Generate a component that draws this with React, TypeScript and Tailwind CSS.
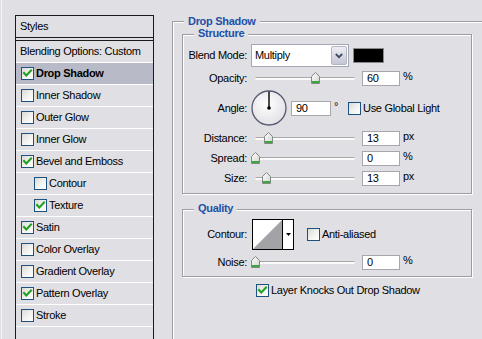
import React from "react";

function Check({ checked }: { checked?: boolean }) {
  return (
    <span className="relative inline-block w-[13px] h-[13px] shrink-0 border border-[#1c5180] bg-linear-to-br from-[#d9d9d4] via-[#f1f1ef] to-white">
      {checked && (
        <svg width="11" height="11" viewBox="0 0 11 11" className="absolute left-0 top-0">
          <path d="M2 5 L4.3 7.5 L9 2.6" stroke="#21a121" strokeWidth="2.1" fill="none" strokeLinecap="square" />
        </svg>
      )}
    </span>
  );
}

function Thumb() {
  return (
    <svg width="9" height="12" viewBox="0 0 9 12">
      <defs>
        <linearGradient id="tg" x1="0" y1="0" x2="1" y2="1">
          <stop offset="0" stopColor="#ffffff" />
          <stop offset="1" stopColor="#cfd3cf" />
        </linearGradient>
      </defs>
      <path d="M0.5 4.5 L4.5 0.5 L8.5 4.5 V11.5 H0.5 Z" fill="url(#tg)" stroke="#7f8a82" strokeWidth="1" />
      <rect x="1" y="9" width="7" height="2" fill="#3fa33f" />
    </svg>
  );
}

function Slider({ pos }: { pos: number }) {
  return (
    <div className="relative ml-[4px] w-[104px] h-full shrink-0">
      <div className="absolute left-[4px] right-0 top-[6px] h-[3px] rounded-[2px] bg-[#fbfbfb] border-t border-[#a8a8ac]" />
      <div className="absolute top-[1px] leading-none" style={{ left: pos }}>
        <Thumb />
      </div>
    </div>
  );
}

function NumBox({ value, w = "w-[38px]" }: { value: string; w?: string }) {
  return (
    <div className={`${w} h-[15px] shrink-0 bg-white border border-[#a6a6ab] pl-[4px] flex items-center leading-none`}>
      {value}
    </div>
  );
}

function Label({ children }: { children: React.ReactNode }) {
  return <span className="w-[64px] shrink-0 text-right whitespace-nowrap">{children}</span>;
}

function SliderRow({ label, pos, value, unit }: { label: string; pos: number; value: string; unit: string }) {
  return (
    <div className="flex items-center h-[15px] mt-[5px]">
      <Label>{label}</Label>
      <Slider pos={pos} />
      <div className="ml-[7px]">
        <NumBox value={value} />
      </div>
      <span className="ml-[3px] self-start leading-[11px]">{unit}</span>
    </div>
  );
}

const items: { label: string; checked?: boolean; selected?: boolean; indent?: boolean }[] = [
  { label: "Drop Shadow", checked: true, selected: true },
  { label: "Inner Shadow" },
  { label: "Outer Glow" },
  { label: "Inner Glow" },
  { label: "Bevel and Emboss", checked: true },
  { label: "Contour", indent: true },
  { label: "Texture", indent: true, checked: true },
  { label: "Satin", checked: true },
  { label: "Color Overlay" },
  { label: "Gradient Overlay" },
  { label: "Pattern Overlay", checked: true },
  { label: "Stroke" },
];

const etched = "border border-[#9d9da1] shadow-[inset_1px_1px_0_#ffffff,1px_1px_0_#ffffff]";

export default function App() {
  return (
    <div className="w-[482px] h-[339px] overflow-hidden bg-[#e0dfe3] flex font-['Liberation_Sans',Arial,sans-serif] text-[11px] tracking-[-0.3px] text-black">
      {/* left edge */}
      <div className="w-[1px] shrink-0" />
      <div className="w-[1px] shrink-0 bg-[#f4f4f6]" />
      {/* Styles list */}
      <div className="pl-[13px] pt-[15px] shrink-0">
        <div className="w-[139px] h-[340px] border-l border-t border-r border-[#1a1a1a] flex flex-col">
          <div className="h-[21px] flex items-center pl-[4px] border-b border-[#1a1a1a] box-content">Styles</div>
          <div className="h-[2px] border-b border-[#1a1a1a] box-content" />
          <div className="h-[21px] flex items-center pl-[4px] border-b border-white box-content">Blending Options: Custom</div>
          {items.map((it) => (
            <div
              key={it.label}
              className={`h-[21px] box-content flex items-center border-b border-white ${it.indent ? "pl-[18px]" : "pl-[5px]"} ${
                it.selected ? "bg-[#b9bac7] font-bold" : ""
              }`}
            >
              <Check checked={it.checked} />
              <span className="ml-[2px] whitespace-nowrap">{it.label}</span>
            </div>
          ))}
        </div>
      </div>

      {/* Drop Shadow group */}
      <div className="ml-[18px] mt-[21px] shrink-0">
        <div className={`relative w-[400px] h-[400px] ${etched}`}>
          <span className="absolute left-[11px] top-[-7px] px-[4px] leading-[13px] bg-[#e0dfe3] font-bold text-[#2150a8]">
            Drop Shadow
          </span>

          {/* Structure */}
          <div className={`relative ml-[9px] mt-[12px] w-[290px] h-[160px] ${etched}`}>
            <span className="absolute left-[11px] top-[-8px] px-[4px] leading-[13px] bg-[#e0dfe3] font-bold text-[#2150a8]">
              Structure
            </span>
            <div className="flex flex-col">
              {/* Blend mode */}
              <div className="flex items-center h-[23px] mt-[9px]">
                <Label>Blend Mode:</Label>
                <div className="ml-[4px] w-[98px] h-[23px] flex border border-[#a3a7b5] bg-white">
                  <div className="flex-1 flex items-center pl-[3px]">Multiply</div>
                  <div className="w-[16px] my-[1px] mr-[1px] rounded-[2px] border border-[#b3b5c6] bg-linear-to-b from-[#eeeef4] to-[#c5c6d5] flex items-center justify-center">
                    <svg width="8" height="6" viewBox="0 0 8 6">
                      <path d="M0.8 1 L4 4.2 L7.2 1" stroke="#3e4a66" strokeWidth="1.8" fill="none" />
                    </svg>
                  </div>
                </div>
                <div className="ml-[4px] w-[31px] h-[15px] bg-black border border-[#8a8a8e]" />
              </div>

              {/* Opacity */}
              <div className="flex items-center h-[15px] mt-[4px]">
                <Label>Opacity:</Label>
                <Slider pos={60} />
                <div className="ml-[7px]">
                  <NumBox value="60" />
                </div>
                <span className="ml-[3px] self-start leading-[11px]">%</span>
              </div>

              {/* Angle */}
              <div className="flex items-center h-[36px] mt-[4px]">
                <Label>Angle:</Label>
                <svg width="36" height="36" viewBox="0 0 36 36" className="ml-[4px] shrink-0">
                  <defs>
                    <radialGradient id="dg" cx="0.45" cy="0.4" r="0.6">
                      <stop offset="0" stopColor="#ffffff" />
                      <stop offset="1" stopColor="#e2e2e7" />
                    </radialGradient>
                  </defs>
                  <circle cx="18" cy="18" r="17" fill="url(#dg)" stroke="#555b70" strokeWidth="1.3" />
                  <line x1="18" y1="1.5" x2="18" y2="18" stroke="#000" strokeWidth="1.4" />
                  <circle cx="18" cy="18" r="1.8" fill="#000" />
                </svg>
                <div className="ml-[4px]">
                  <NumBox value="90" w="w-[40px]" />
                </div>
                <span className="w-[14px] pl-[3px] self-start mt-[11px] leading-[11px]">°</span>
                <div className="ml-[3px] flex items-center">
                  <Check />
                  <span className="ml-[2px] whitespace-nowrap">Use Global Light</span>
                </div>
              </div>

              <SliderRow label="Distance:" pos={13} value="13" unit="px" />
              <SliderRow label="Spread:" pos={0} value="0" unit="%" />
              <SliderRow label="Size:" pos={11} value="13" unit="px" />
            </div>
          </div>

          {/* Quality */}
          <div className={`relative ml-[9px] mt-[15px] w-[290px] h-[68px] ${etched}`}>
            <span className="absolute left-[11px] top-[-8px] px-[4px] leading-[13px] bg-[#e0dfe3] font-bold text-[#2150a8]">
              Quality
            </span>
            <div className="flex flex-col">
              <div className="flex items-center h-[31px] mt-[9px]">
                <Label>Contour:</Label>
                <div className="ml-[5px] w-[42px] h-[31px] flex border border-black bg-white">
                  <svg width="29" height="29" viewBox="0 0 29 29" className="shrink-0">
                    <polygon points="0,29 29,0 29,29" fill="#a3a3a7" />
                  </svg>
                  <div className="flex-1 border-l border-black flex items-center justify-center">
                    <svg width="5" height="3" viewBox="0 0 5 3">
                      <polygon points="0,0 5,0 2.5,3" fill="#000" />
                    </svg>
                  </div>
                </div>
                <div className="ml-[13px] flex items-center">
                  <Check />
                  <span className="ml-[2px] whitespace-nowrap">Anti-aliased</span>
                </div>
              </div>
              <SliderRow label="Noise:" pos={0} value="0" unit="%" />
            </div>
          </div>

          {/* Layer knocks out */}
          <div className="flex items-center ml-[83px] mt-[7px] h-[13px]">
            <Check checked />
            <span className="ml-[2px] whitespace-nowrap">Layer Knocks Out Drop Shadow</span>
          </div>
        </div>
      </div>
    </div>
  );
}
